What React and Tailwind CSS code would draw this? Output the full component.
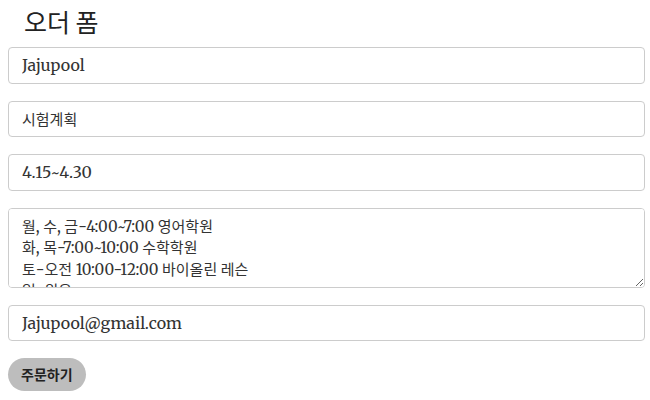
import React, { useState } from 'react';

const serif = "font-['Merriweather','DejaVu_Serif','Noto_Sans_CJK_KR',serif]";

const fieldClass = `w-full h-[36.5px] px-[13px] bg-white border border-[#cccccc] rounded-[4px] text-[#333] outline-none ${serif}`;

const App = () => {
  const [form, setForm] = useState({
    name: 'Jajupool',
    title: '시험계획',
    period: '4.15~4.30',
    plan: '월, 수, 금-4:00~7:00 영어학원\n화, 목-7:00~10:00 수학학원\n토-오전 10:00-12:00 바이올린 레슨\n일-원유',
    email: 'Jajupool@gmail.com',
  });

  const handleChange = (e) => setForm({ ...form, [e.target.name]: e.target.value });

  return (
    <div className="w-[650px] h-[400px] bg-white pl-2 pr-[5px] overflow-hidden">
      <h1 className="pl-4 pt-[5px] h-[47px] text-[25px] leading-[32px] text-[#222] font-['Noto_Sans_CJK_KR',sans-serif]">
        오더 폼
      </h1>
      <form className="flex flex-col gap-[17px]" onSubmit={(e) => e.preventDefault()}>
        <input name="name" value={form.name} onChange={handleChange} className={`${fieldClass} text-[16px]`} />
        <input name="title" value={form.title} onChange={handleChange} className={`${fieldClass} text-[15px]`} />
        <input name="period" value={form.period} onChange={handleChange} className={`${fieldClass} text-[16px]`} />
        <textarea
          name="plan"
          value={form.plan}
          onChange={handleChange}
          className={`w-full h-[80px] px-[13px] pt-[7px] bg-white border border-[#cccccc] rounded-[4px] text-[15px] leading-[21.5px] text-[#333] outline-none ${serif}`}
        />
        <input name="email" value={form.email} onChange={handleChange} className={`${fieldClass} text-[16px]`} />
        <div>
          <button
            type="submit"
            className="h-[33px] px-[13px] rounded-full bg-[#bdbdbd] text-[14px] font-bold text-[#222] font-['Noto_Sans_CJK_KR',sans-serif]"
          >
            주문하기
          </button>
        </div>
      </form>
    </div>
  );
};

export default App;
